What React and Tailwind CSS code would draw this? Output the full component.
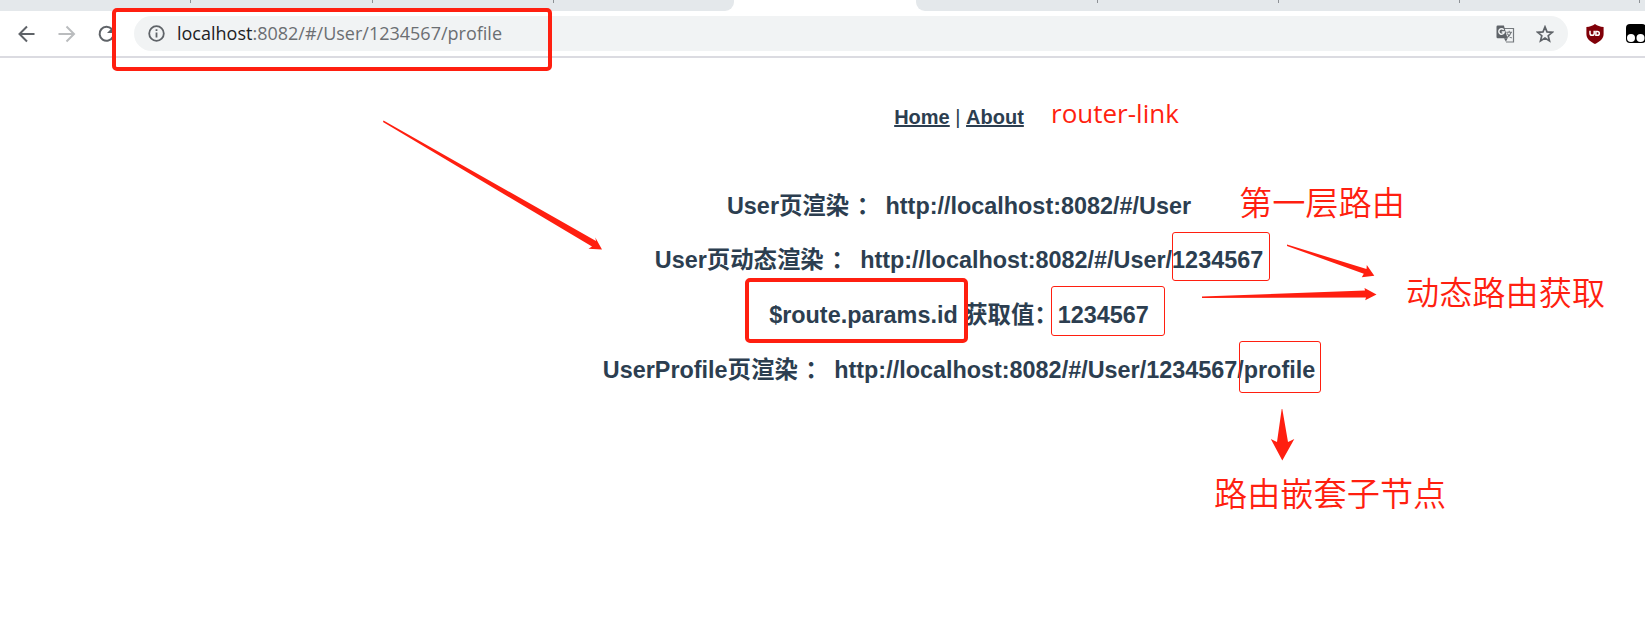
function TabStrip() {
  return (
    <div className="flex h-[11px] bg-white">
      <div className="flex w-[734px] rounded-br-[9px] bg-[#e4e8eb]">
        <div className="h-[3px] w-[191px] border-r border-[#8d9195]" />
        <div className="h-[3px] w-[182px] border-r border-[#8d9195]" />
        <div className="h-[3px] w-[181px] border-r border-[#8d9195]" />
      </div>
      <div className="w-[182px]" />
      <div className="flex flex-1 rounded-bl-[9px] bg-[#e4e8eb]">
        <div className="h-[3px] w-[182px] border-r border-[#8d9195]" />
        <div className="h-[3px] w-[181px] border-r border-[#8d9195]" />
        <div className="h-[3px] w-[181px] border-r border-[#8d9195]" />
        <div className="h-[3px] w-[180px] border-r border-[#8d9195]" />
      </div>
    </div>
  );
}

function Toolbar() {
  return (
    <div className="flex h-[47px] items-center border-b-2 border-[#dbdbe1] bg-white">
      <svg className="ml-[17px] h-5 w-5 shrink-0" viewBox="0 0 20 20" fill="none" stroke="#5f6368" strokeWidth="2">
        <path d="M17.500 10H3M10 2.500 2.500 10 10 17.500" />
      </svg>
      <svg className="ml-5 h-5 w-5 shrink-0" viewBox="0 0 20 20" fill="none" stroke="#babcbe" strokeWidth="2">
        <path d="M1.500 10h15M9.500 2.500 17 10 9.500 17.500" />
      </svg>
      <svg className="ml-5 h-5 w-5 shrink-0" viewBox="0 0 20 20" fill="none" stroke="#5f6368" strokeWidth="2">
        <path d="M14.700 5A7 7 0 1 0 15.800 13" />
        <path d="M17 2v7h-7z" fill="#5f6368" stroke="none" />
      </svg>
      <div className="ml-[17px] flex h-[35px] w-[1434px] shrink-0 items-center rounded-full bg-[#f1f3f4]">
        <svg className="ml-[14px] h-[17px] w-[17px]" viewBox="0 0 17 17" fill="none" stroke="#5f6368" strokeWidth="1.8">
          <circle cx="8.5" cy="8.5" r="7.3" />
          <path d="M8.5 7.6v5M8.5 4.3v1.8" />
        </svg>
        <div className="ml-3 whitespace-nowrap pb-[2px] font-['Open_Sans',sans-serif] text-[18px] leading-[24px] text-[#6b6e72]">
          <span className="text-[#202124]">localhost</span>:8082/#/User/1234567/profile
        </div>
        <svg className="ml-auto h-[18px] w-[19px]" viewBox="0 0 19 18">
          <path d="M8 3.500h9.500v13.500H10" fill="#f1f3f4" stroke="#75797d" strokeWidth="1.200" />
          <path d="M1.700.5h6.200l3.600 12.800H1.700Q.5 13.300.5 12V1.700Q.5.5 1.700.5z" fill="#5f6368" />
          <path d="M7.700 4.900A2.700 2.700 0 1 0 8.200 7H5.700" fill="none" stroke="#f1f3f4" strokeWidth="1.500" />
          <path d="M10.300 7.300H16M13.200 5.800v1.500M15 7.500Q14.200 10.500 10.800 12.800M11.300 8.500Q12.800 11.500 15.700 13" fill="none" stroke="#75797d" strokeWidth="1.100" />
          <path d="M8 13.300h3.600L9.900 16.800z" fill="#5f6368" />
        </svg>
        <svg className="ml-[21px] mr-[14px] h-[18px] w-[18px]" viewBox="0 0 18 18" fill="none" stroke="#5f6368" strokeWidth="1.700">
          <path d="m9 1.900 2 5 5.300.4-4.100 3.400 1.300 5.200L9 13.100l-4.500 2.800 1.300-5.200L1.700 7.300 7 6.900z" />
        </svg>
      </div>
      <svg className="ml-[18px] h-5 w-[18px] shrink-0" viewBox="0 0 18 20">
        <path d="M9 0c2.500 1.900 5 2.700 8.600 2.900v7.300C17.600 15 13 18 9 20 5 18 .4 15 .4 10.200V2.900C4 2.700 6.500 1.900 9 0z" fill="#800008" />
        <path d="M4 6.800v2.400a2.100 2.100 0 0 0 4.200 0V6.800M9.900 7.500v3.800h1.500a1.900 1.900 0 0 0 0-3.800z" fill="none" stroke="#fff" strokeWidth="1.500" />
      </svg>
      <svg className="ml-[22px] h-5 w-5 shrink-0" viewBox="0 0 20 20">
        <rect width="20" height="19" rx="4" fill="#000" />
        <circle cx="5" cy="14" r="4" fill="#fff" />
        <circle cx="14.500" cy="14" r="4" fill="#fff" />
      </svg>
    </div>
  );
}

function WideColon() {
  return <span className="inline-block w-[23.4px] pl-[7.5px] text-left">：</span>;
}

function Page() {
  const row = "h-[31px] whitespace-pre";
  return (
    <main className="w-[1918px] text-center text-[#2c3e50] font-['Liberation_Sans','Noto_Sans_CJK_SC',sans-serif]">
      <nav className="pt-[48px] text-[20px] leading-[23px]">
        <a className="font-bold underline">Home</a>
        {" | "}
        <a className="font-bold underline">About</a>
      </nav>
      <section className="mt-[61.6px] flex flex-col gap-[23.7px] text-[23.4px] font-bold leading-[31px]">
        <h3 className={row}>User页渲染<WideColon />{"  "}http://localhost:8082/#/User</h3>
        <h3 className={row}>User页动态渲染<WideColon />{"  "}http://localhost:8082/#/User/1234567</h3>
        <h3 className={row}>$route.params.id 获取值：1234567</h3>
        <h3 className={row}>UserProfile页渲染<WideColon />{"  "}http://localhost:8082/#/User/1234567/profile</h3>
      </section>
    </main>
  );
}

function Annotations() {
  const note = "absolute whitespace-nowrap text-[33.2px] leading-[40px] text-[#ff1f10] font-['Noto_Sans_CJK_SC',sans-serif] font-[350]";
  return (
    <div className="pointer-events-none absolute inset-0">
      <div className="absolute left-[112px] top-[8px] h-[63px] w-[440px] rounded-[5px] border-4 border-[#ff1f10]" />
      <div className="absolute left-[745px] top-[278px] h-[65px] w-[223px] rounded-[5px] border-4 border-[#ff1f10]" />
      <div className="absolute left-[1172px] top-[232px] h-[49px] w-[98px] rounded-[3px] border border-[#ff1f10]" />
      <div className="absolute left-[1051px] top-[286px] h-[50px] w-[114px] rounded-[3px] border border-[#ff1f10]" />
      <div className="absolute left-[1239px] top-[341px] h-[52px] w-[82px] rounded-[3px] border border-[#ff1f10]" />
      <svg className="absolute inset-0 h-full w-full" viewBox="0 0 1645 636" fill="#ff1f10">
        <path d="M383.500 120.500L596 241l-.7-3.500 6.700 12-13.500-.7 3.500-2.300L383 122z" />
        <path d="M1287 244.500l79.500 24.500.3-4 7.500 10.700-12.500 1.500 2-3.500L1287 246z" />
        <path d="M1202 296.500l163-6-.5-2.500 12 6.500-11.300 5.800.8-2.800L1202 298z" />
        <path d="M1282.300 409l5.700 33 6.300-3-12 21.500-11.500-21.500 6.200 3 4.700-33z" />
      </svg>
      <div className="absolute left-[1051px] top-[95px] whitespace-nowrap font-['Open_Sans',sans-serif] text-[26px] leading-[36px] text-[#ff1f10]">router-link</div>
      <div className={note + " left-[1239px] top-[181px]"}>第一层路由</div>
      <div className={note + " left-[1406px] top-[271px]"}>动态路由获取</div>
      <div className={note + " left-[1214px] top-[472px]"}>路由嵌套子节点</div>
    </div>
  );
}

export default function App() {
  return (
    <div className="relative h-[636px] w-[1645px] overflow-hidden bg-white">
      <TabStrip />
      <Toolbar />
      <Page />
      <Annotations />
    </div>
  );
}
